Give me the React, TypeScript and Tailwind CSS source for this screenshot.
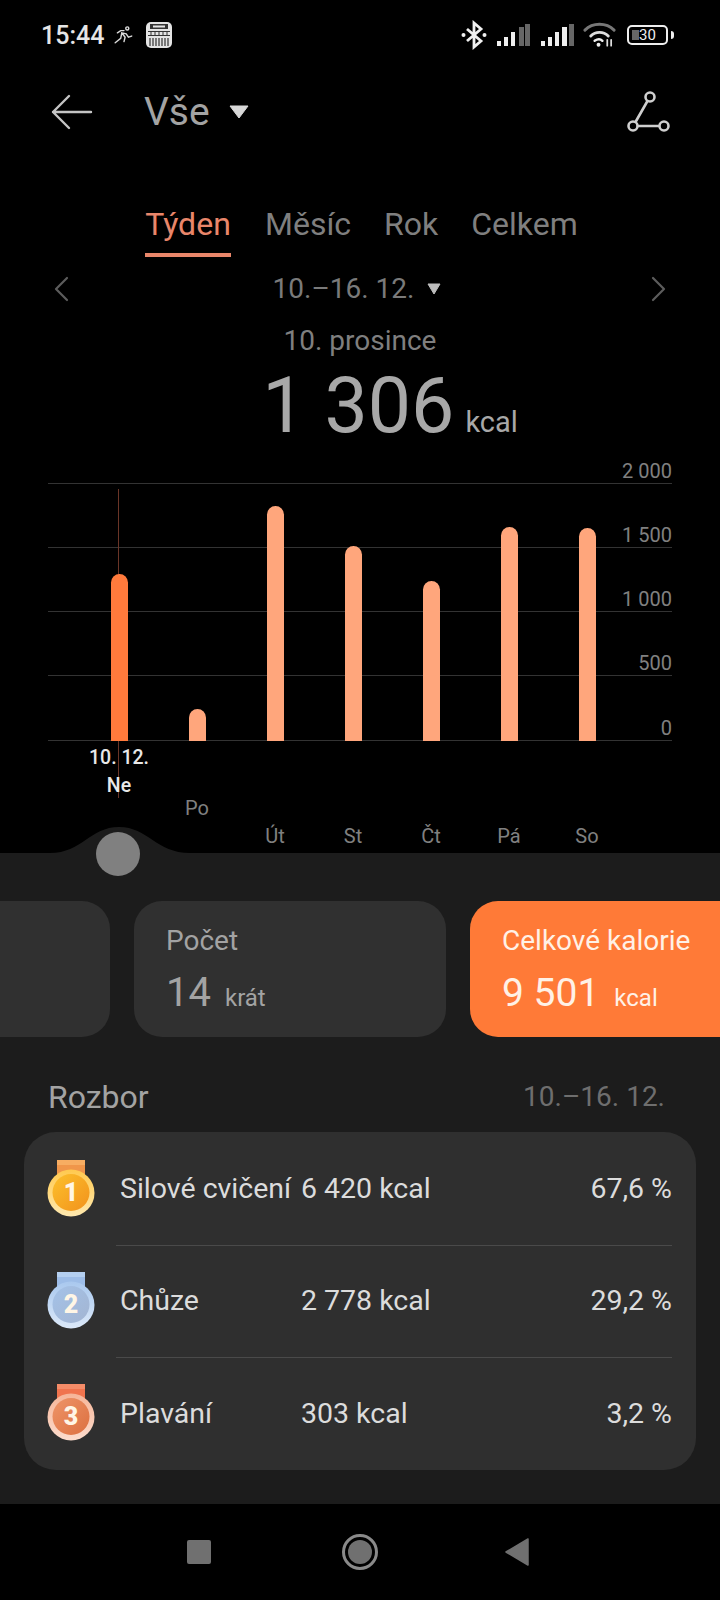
import React from 'react';

const bars = [
  { day: 'Ne', h: 'h-[167px]', color: 'bg-[#ff7a3c]' },
  { day: 'Po', h: 'h-[32px]', color: 'bg-[#ffa67c]' },
  { day: 'Út', h: 'h-[235px]', color: 'bg-[#ffa67c]' },
  { day: 'St', h: 'h-[195px]', color: 'bg-[#ffa67c]' },
  { day: 'Čt', h: 'h-[160px]', color: 'bg-[#ffa67c]' },
  { day: 'Pá', h: 'h-[214px]', color: 'bg-[#ffa67c]' },
  { day: 'So', h: 'h-[213px]', color: 'bg-[#ffa67c]' },
];

const axis = [
  { label: '2 000', h: 'h-[24px]' },
  { label: '1 500', h: 'h-[64px]' },
  { label: '1 000', h: 'h-[64px]' },
  { label: '500', h: 'h-[64px]' },
  { label: '0', h: 'h-[65px]' },
];

const rows = [
  { name: 'Silové cvičení', kcal: '6 420 kcal', pct: '67,6 %', rank: 1 },
  { name: 'Chůze', kcal: '2 778 kcal', pct: '29,2 %', rank: 2 },
  { name: 'Plavání', kcal: '303 kcal', pct: '3,2 %', rank: 3 },
];

const medalColors: Record<number, { ribbon: string; ribbonTop: string; rim: string; rimDark: string; a: string; b: string }> = {
  1: { ribbon: '#f0964a', ribbonTop: '#f7ad62', rim: '#ffe9b0', rimDark: '#ffc94e', a: '#fcc02c', b: '#f2921c' },
  2: { ribbon: '#9dbde8', ribbonTop: '#b4cff0', rim: '#dce9f9', rimDark: '#a9c8ee', a: '#a4c2e8', b: '#a3b5d2' },
  3: { ribbon: '#f0744e', ribbonTop: '#f58c68', rim: '#fcdccd', rimDark: '#f6b598', a: '#ee9468', b: '#dc7040' },
};

const Medal = ({ rank }: { rank: number }) => {
  const c = medalColors[rank];
  return (
    <svg width="48" height="57" viewBox="0 0 48 57" className="shrink-0 -mt-[4px]">
      <defs>
        <linearGradient id={`m${rank}`} x1="0" y1="0" x2="1" y2="1">
          <stop offset="0" stopColor={c.a} />
          <stop offset="1" stopColor={c.b} />
        </linearGradient>
        <linearGradient id={`r${rank}`} x1="0" y1="0" x2="0" y2="1">
          <stop offset="0" stopColor={c.rimDark} />
          <stop offset="1" stopColor={c.rim} />
        </linearGradient>
      </defs>
      <rect x="10" y="0" width="28" height="18" fill={c.ribbon} />
      <rect x="10" y="0" width="28" height="5" fill={c.ribbonTop} />
      <circle cx="24" cy="33" r="23.5" fill={`url(#r${rank})`} />
      <circle cx="24" cy="32.5" r="18.5" fill={`url(#m${rank})`} />
      <text x="24" y="41" textAnchor="middle" fontSize="25" fontWeight="900" fontFamily="Roboto, sans-serif" fill="#fff6e6">
        {rank}
      </text>
    </svg>
  );
};

const StatusBar = () => (
  <div className="h-[70px] flex items-center justify-between pl-[41px] pr-[46px] shrink-0">
    <div className="flex items-center">
      <span className="text-[25px] font-medium text-[#e6e6e6] leading-none">15:44</span>
      <svg width="22" height="22" viewBox="0 0 20 20" className="ml-[9px]" fill="none" stroke="#d8d8d8" strokeWidth="1.3" strokeLinecap="round">
        <circle cx="13" cy="4" r="1.4" />
        <path d="M2 17l5-4 1-5 4 1 2 3 3-1M8 8l3 4-1 4" />
        <path d="M4 8l3-2h3" />
      </svg>
      <svg width="28" height="28" viewBox="0 0 28 28" className="ml-[10px]">
        <rect x="1" y="1" width="26" height="26" rx="5" fill="#e4e4e4" />
        <rect x="5" y="3" width="18" height="5" fill="#333" />
        <rect x="8" y="4.5" width="12" height="2" fill="#e4e4e4" />
        <path d="M3 10h22v1H3zM3 14h22v1H3z" fill="#333" />
        <path d="M6 11v3M10 11v3M14 11v3M18 11v3M22 11v3" stroke="#333" strokeWidth="1" />
        <path d="M5 17v8M8 17v8M11 17v8M14 17v8M17 17v8M20 17v8M23 17v8" stroke="#333" strokeWidth="1.2" />
      </svg>
    </div>
    <div className="flex items-center">
      <svg width="26" height="30" viewBox="0 0 26 30" fill="none" stroke="#f0f0f0" strokeWidth="2.8">
        <path d="M6 9l14 12-7 6V3l7 6L6 21" />
        <circle cx="2.5" cy="15" r="2" fill="#f0f0f0" stroke="none" />
        <circle cx="23.5" cy="15" r="2" fill="#f0f0f0" stroke="none" />
      </svg>
      <svg width="35" height="24" viewBox="0 0 35 24" className="ml-[9px]">
        <rect x="1" y="18" width="4" height="5" fill="#eee" />
        <rect x="8" y="14" width="4" height="9" fill="#eee" />
        <rect x="15" y="9" width="4" height="14" fill="#eee" />
        <rect x="23" y="4" width="5" height="19" fill="#666" />
        <rect x="29" y="1" width="5" height="22" fill="#666" />
      </svg>
      <svg width="34" height="24" viewBox="0 0 34 24" className="ml-[9px]">
        <rect x="1" y="18" width="4" height="5" fill="#eee" />
        <rect x="8" y="14" width="4" height="9" fill="#eee" />
        <rect x="15" y="9" width="4" height="14" fill="#eee" />
        <rect x="22" y="4" width="5" height="19" fill="#eee" />
        <rect x="29" y="1" width="5" height="22" fill="#666" />
      </svg>
      <svg width="33" height="26" viewBox="0 0 34 26" className="ml-[9px]" fill="none" strokeLinecap="round">
        <path d="M2 8C10 0 24 0 32 8" stroke="#777" strokeWidth="3" />
        <path d="M8 14c5-5 13-5 18 0" stroke="#ddd" strokeWidth="3" />
        <path d="M12 19c3-2 6-2 8 0" stroke="#eee" strokeWidth="2.5" />
        <circle cx="16" cy="23" r="2" fill="#eee" />
        <path d="M25 18v6M29 18v6" stroke="#ddd" strokeWidth="1.8" />
      </svg>
      <div className="ml-[11px] w-[41px] h-[20px] border-[2.5px] border-[#eeeeee] rounded-[5px] flex items-center justify-center relative">
        <div className="absolute left-[3px] top-[3px] bottom-[3px] w-[7px] bg-[#666666]" />
        <span className="relative text-[15px] leading-none text-[#eeeeee]">30</span>
      </div>
      <div className="ml-[3px] w-[3px] h-[8px] bg-[#eeeeee] rounded-r-sm" />
    </div>
  </div>
);

const Header = () => (
  <div className="h-[84px] flex items-center pl-[50px] pr-[48px] shrink-0">
    <svg width="44" height="36" viewBox="0 0 44 36" fill="none" stroke="#c4c4c4" strokeWidth="2.4" strokeLinecap="round" strokeLinejoin="round">
      <path d="M41 18H3M19 2L3 18l16 16" />
    </svg>
    <span className="ml-[50px] text-[39px] leading-none text-[#a3a3a3]">Vše</span>
    <svg width="20" height="14" viewBox="0 0 20 14" className="ml-[19px]">
      <path d="M1 1h18L10 13z" fill="#d8d8d8" stroke="#d8d8d8" strokeLinejoin="round" />
    </svg>
    <svg width="46" height="44" viewBox="0 0 46 44" className="ml-auto" fill="none" stroke="#cfcfcf" strokeWidth="2.6">
      <circle cx="24" cy="7" r="4.5" />
      <circle cx="7" cy="36" r="4.5" />
      <circle cx="38" cy="36" r="4.5" />
      <path d="M21.5 11L9.5 32M11.5 36h22" />
    </svg>
  </div>
);

const Tabs = () => (
  <div className="mt-[46px] h-[57px] flex pl-[145px] text-[32px] leading-[48px] text-[#7f7f7f] shrink-0">
    <div className="w-[86px] h-full text-center text-[#e9866a] border-b-[4px] border-[#e9866a]">Týden</div>
    <div className="ml-[34px]">Měsíc</div>
    <div className="ml-[33px]">Rok</div>
    <div className="ml-[33px]">Celkem</div>
  </div>
);

const Chart = () => (
  <div className="relative mx-[48px] mt-[17px] shrink-0">
    <div className="absolute left-[70px] top-[29px] w-px h-[309px] bg-[#6a3527]" />
    <div className="flex flex-col">
      {axis.map((a) => (
        <div key={a.label} className={`${a.h} flex items-end justify-end border-b border-[#333333] text-[20px] leading-[23px] text-[#808080]`}>
          <span>{a.label}</span>
        </div>
      ))}
    </div>
    <div className="absolute left-[32px] bottom-[112px] w-[546px] grid grid-cols-7 items-end">
      {bars.map((b) => (
        <div key={b.day} className="flex justify-center">
          <div className={`w-[17px] rounded-t-full ${b.h} ${b.color}`} />
        </div>
      ))}
    </div>
    <div className="w-[546px] h-[112px] ml-[32px] grid grid-cols-7 text-center text-[20px] text-[#808080] leading-[24px]">
      <div className="relative mt-[3px] font-medium text-[19.5px] text-[#e8e8e8] leading-[28px] -mx-[10px]">
        10. 12.
        <br />
        Ne
      </div>
      <div className="mt-[55px]">Po</div>
      <div className="mt-[83px]">Út</div>
      <div className="mt-[83px]">St</div>
      <div className="mt-[83px]">Čt</div>
      <div className="mt-[83px]">Pá</div>
      <div className="mt-[83px]">So</div>
    </div>
  </div>
);

const Panel = () => (
  <div className="relative flex-1 bg-[#1c1c1c]">
    <svg width="140" height="26" viewBox="0 0 140 26" className="absolute left-[50px] -top-[26px]">
      <path d="M0 26C32 26 40 0 69 0S106 26 140 26Z" fill="#1c1c1c" />
    </svg>
    <div className="absolute left-[96px] -top-[21px] w-[44px] h-[44px] rounded-full bg-[#808080]" />

    <div className="pt-[48px] flex gap-[24px] -ml-[202px] w-[1000px]">
      <div className="w-[312px] h-[136px] rounded-[28px] bg-[#303030]" />
      <div className="w-[312px] h-[136px] rounded-[28px] bg-[#303030] pl-[32px] pt-[22px]">
        <div className="text-[28px] leading-[36px] text-[#a3a3a3]">Počet</div>
        <div className="flex items-baseline mt-[10px] text-[#a3a3a3]">
          <span className="text-[40px] leading-[48px]">14</span>
          <span className="ml-[14px] text-[24px]">krát</span>
        </div>
      </div>
      <div className="w-[312px] h-[136px] rounded-[28px] bg-[#ff7a37] pl-[32px] pt-[22px] text-[#fff1e6]">
        <div className="text-[28px] leading-[36px]">Celkové kalorie</div>
        <div className="flex items-baseline mt-[10px]">
          <span className="text-[39px] leading-[48px]">9 501</span>
          <span className="ml-[15px] text-[24px]">kcal</span>
        </div>
      </div>
    </div>

    <div className="mt-[40px] h-[40px] px-[48px] pr-[55px] flex items-center justify-between">
      <span className="text-[32px] text-[#a3a3a3]">Rozbor</span>
      <span className="text-[28px] text-[#6e6e6e]">10.–16. 12.</span>
    </div>

    <div className="mx-[24px] mt-[15px] h-[338px] rounded-[32px] bg-[#2f2f2f] pt-[2px]">
      {rows.map((r, i) => (
        <div key={r.rank} className="h-[112px] flex items-center pl-[23px] pr-[24px] relative">
          <Medal rank={r.rank} />
          <div className={`flex-1 ml-[21px] h-full flex items-center text-[28.5px] text-[#dcdcdc] ${i < 2 ? 'border-b border-[#4a4a4a]' : ''}`}>
            <span className="w-[185px] pl-[4px] whitespace-nowrap">{r.name}</span>
            <span className="w-[200px] whitespace-nowrap">{r.kcal}</span>
            <span className="flex-1 text-right">{r.pct}</span>
          </div>
        </div>
      ))}
    </div>
  </div>
);

const NavBar = () => (
  <div className="h-[96px] bg-black flex items-center shrink-0 pl-[187px]">
    <div className="w-[24px] h-[24px] bg-[#707070] rounded-[2px]" />
    <div className="ml-[131px] w-[36px] h-[36px] rounded-full border-[3px] border-[#8a8a8a] p-[3px]">
      <div className="w-full h-full rounded-full bg-[#707070]" />
    </div>
    <svg width="26" height="30" viewBox="0 0 26 30" className="ml-[126px]">
      <path d="M24 2v26L2 15z" fill="#707070" stroke="#707070" strokeWidth="1.5" strokeLinejoin="round" />
    </svg>
  </div>
);

export default function App() {
  return (
    <div className="w-[720px] h-[1600px] bg-black overflow-hidden flex flex-col font-['Roboto',sans-serif]">
      <StatusBar />
      <Header />
      <Tabs />
      <div className="mt-[12px] h-[40px] flex items-center px-[53px] shrink-0">
        <svg width="16" height="26" viewBox="0 0 16 26" fill="none" stroke="#5c5c5c" strokeWidth="2.2" strokeLinecap="round" strokeLinejoin="round">
          <path d="M14 2L3 13l11 11" />
        </svg>
        <div className="flex-1 flex justify-center items-center text-[28px] text-[#7a7a7a] pr-[6px]">
          <span>10.–16. 12.</span>
          <svg width="14" height="12" viewBox="0 0 14 12" className="ml-[13px]">
            <path d="M1 1h12L7 11z" fill="#bdbdbd" stroke="#bdbdbd" strokeLinejoin="round" />
          </svg>
        </div>
        <svg width="16" height="26" viewBox="0 0 16 26" fill="none" stroke="#5c5c5c" strokeWidth="2.2" strokeLinecap="round" strokeLinejoin="round">
          <path d="M2 2l11 11L2 24" />
        </svg>
      </div>
      <div className="mt-[14px] text-center text-[28px] leading-[36px] text-[#7f7f7f] shrink-0">10. prosince</div>
      <div className="flex justify-center items-baseline h-[74px] leading-[74px] text-[#a8a8a8] shrink-0 mt-[10px] pl-[60px]">
        <span className="text-[77px]">1 306</span>
        <span className="ml-[11px] text-[29px]">kcal</span>
      </div>
      <Chart />
      <Panel />
      <NavBar />
    </div>
  );
}
